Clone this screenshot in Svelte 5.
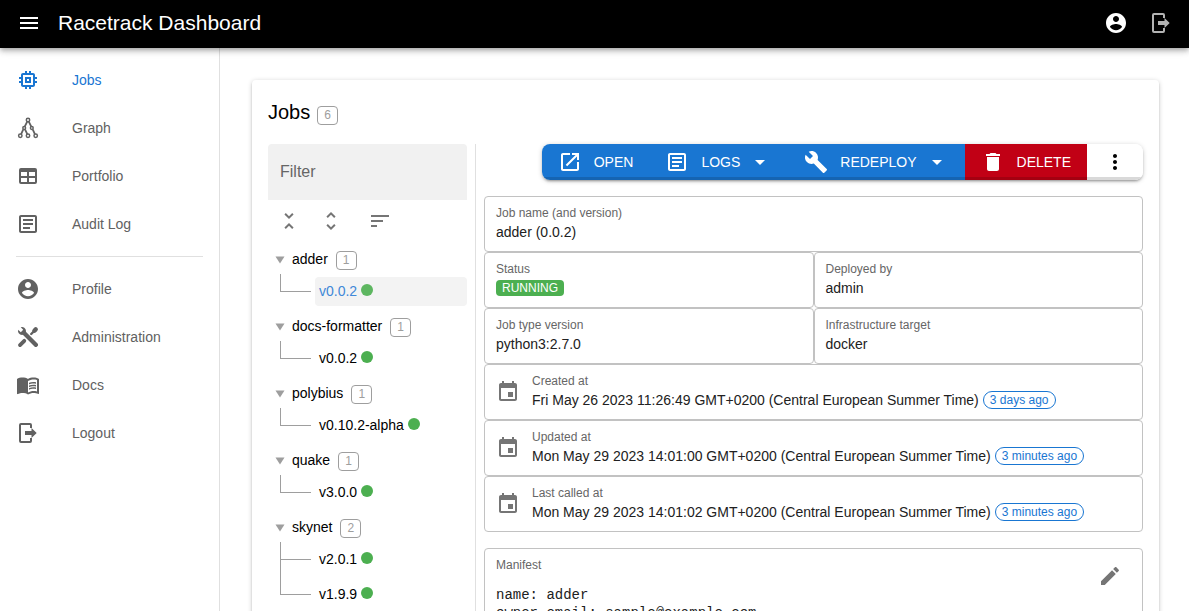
<script>
  const icons = {
    menu: 'M3 18h18v-2H3v2zm0-5h18v-2H3v2zm0-7v2h18V6H3z',
    account:
      'M12 2C6.48 2 2 6.48 2 12s4.48 10 10 10 10-4.48 10-10S17.52 2 12 2zm0 3c1.66 0 3 1.34 3 3s-1.34 3-3 3-3-1.34-3-3 1.34-3 3-3zm0 14.2c-2.5 0-4.71-1.28-6-3.22.03-1.99 4-3.08 6-3.08 1.99 0 5.97 1.09 6 3.08-1.29 1.94-3.5 3.22-6 3.22z',
    logout:
      'M15.500 17V14H9v-4h6.500V7l5.200 5-5.200 5M14 2a2 2 0 0 1 2 2v3h-2V4H5v16h9v-3h2v3a2 2 0 0 1-2 2H5a2 2 0 0 1-2-2V4a2 2 0 0 1 2-2h9z',
    memory:
      'M15 9H9v6h6V9zm-2 4h-2v-2h2v2zm8-2V9h-2V7c0-1.100-.9-2-2-2h-2V3h-2v2h-2V3H9v2H7c-1.100 0-2 .9-2 2v2H3v2h2v2H3v2h2v2c0 1.100.9 2 2 2h2v2h2v-2h2v2h2v-2h2c1.100 0 2-.9 2-2v-2h2v-2h-2v-2h2zm-4 6H7V7h10v10z',
    table:
      'M5 4h14a2 2 0 0 1 2 2v12a2 2 0 0 1-2 2H5a2 2 0 0 1-2-2V6a2 2 0 0 1 2-2m0 4v4h6V8H5m8 0v4h6V8h-6m-8 6v4h6v-4H5m8 0v4h6v-4h-6z',
    article:
      'M19 5v14H5V5h14m0-2H5c-1.100 0-2 .9-2 2v14c0 1.100.9 2 2 2h14c1.100 0 2-.9 2-2V5c0-1.100-.9-2-2-2zM14 17H7v-2h7v2zm3-4H7v-2h10v2zm0-4H7V7h10v2z',
    wrench:
      'M21.710 20.290l-1.420 1.420a1 1 0 0 1-1.410 0L7 9.850A3.810 3.810 0 0 1 6 10 4 4 0 0 1 2.220 4.700l2.540 2.540.530-.530 1.420-1.420.530-.530L4.700 2.220A4 4 0 0 1 10 6a3.810 3.810 0 0 1-.150 1l11.860 11.880a1 1 0 0 1 0 1.410',
    book:
      'M21 5c-1.110-.35-2.330-.5-3.500-.5-1.950 0-4.050.4-5.500 1.500-1.450-1.100-3.550-1.500-5.500-1.500S2.450 4.900 1 6v14.650c0 .25.25.5.5.5.1 0 .15-.05.25-.05C3.100 20.450 5.050 20 6.500 20c1.950 0 4.050.4 5.500 1.500 1.350-.85 3.800-1.500 5.500-1.500 1.650 0 3.350.3 4.750 1.050.1.05.15.05.25.05.25 0 .5-.25.5-.5V6c-.6-.45-1.250-.75-2-1zm0 13.500c-1.100-.35-2.300-.5-3.500-.5-1.700 0-4.150.65-5.500 1.500V8c1.350-.85 3.800-1.500 5.500-1.500 1.200 0 2.400.15 3.500.5v11.500zM17.500 10.500c.88 0 1.730.09 2.500.26V9.240c-.79-.15-1.640-.24-2.500-.24-1.700 0-3.240.29-4.500.83v1.660c1.130-.64 2.700-.99 4.500-.99zM13 12.490v1.660c1.130-.64 2.700-.99 4.500-.99.88 0 1.730.09 2.500.26V11.900c-.79-.15-1.640-.24-2.500-.24-1.700 0-3.240.3-4.500.83zm4.500 1.840c-1.700 0-3.240.29-4.500.83v1.660c1.130-.64 2.700-.99 4.500-.99.88 0 1.730.09 2.500.26v-1.520c-.79-.16-1.640-.24-2.500-.24z',
    less: 'M7.410 18.590L8.830 20 12 16.830 15.170 20l1.410-1.410L12 14l-4.590 4.590zm9.180-13.180L15.170 4 12 7.170 8.830 4 7.410 5.410 12 10l4.590-4.590z',
    more: 'M12 5.830L15.170 9l1.410-1.410L12 3 7.410 7.590 8.830 9 12 5.830zm0 12.340L8.830 15l-1.410 1.410L12 21l4.590-4.590L15.170 15 12 18.170z',
    sort: 'M3 18h6v-2H3v2zM3 6v2h18V6H3zm0 7h12v-2H3v2z',
    open: 'M19 19H5V5h7V3H5c-1.110 0-2 .9-2 2v14c0 1.100.89 2 2 2h14c1.100 0 2-.9 2-2v-7h-2v7zM14 3v2h3.590l-9.830 9.830 1.410 1.410L19 6.410V10h2V3h-7z',
    build:
      'M22.700 19l-9.100-9.100c.9-2.300.4-5-1.500-6.900-2-2-5-2.400-7.400-1.300L9 6 6 9 1.600 4.700C.4 7.100.9 10.100 2.900 12.100c1.900 1.900 4.600 2.400 6.900 1.500l9.100 9.100c.4.4 1 .4 1.400 0l2.300-2.300c.5-.4.5-1.100.1-1.400z',
    trash: 'M6 19c0 1.100.9 2 2 2h8c1.100 0 2-.9 2-2V7H6v12zM19 4h-3.500l-1-1h-5l-1 1H5v2h14V4z',
    dropdown: 'M7 10l5 5 5-5z',
    dots: 'M12 8c1.100 0 2-.9 2-2s-.9-2-2-2-2 .9-2 2 .9 2 2 2zm0 2c-1.100 0-2 .9-2 2s.9 2 2 2 2-.9 2-2-.9-2-2-2zm0 6c-1.100 0-2 .9-2 2s.9 2 2 2 2-.9 2-2-.9-2-2-2z',
    event:
      'M17 12h-5v5h5v-5zM16 1v2H8V1H6v2H5c-1.110 0-1.990.9-1.990 2L3 19c0 1.100.89 2 2 2h14c1.100 0 2-.9 2-2V5c0-1.100-.9-2-2-2h-1V1h-2zm3 18H5V8h14v11z',
    edit: 'M3 17.250V21h3.750L17.810 9.940l-3.750-3.750L3 17.250zM20.710 7.040c.39-.39.39-1.020 0-1.410l-2.340-2.340c-.39-.39-1.020-.39-1.410 0l-1.830 1.830 3.750 3.750 1.830-1.830z',
  };

  const mainLinks = [
    { label: 'Jobs', icon: 'memory', active: true },
    { label: 'Graph', icon: 'graph' },
    { label: 'Portfolio', icon: 'table' },
    { label: 'Audit Log', icon: 'article' },
  ];
  const userLinks = [
    { label: 'Profile', icon: 'account' },
    { label: 'Administration', icon: 'tools' },
    { label: 'Docs', icon: 'book' },
    { label: 'Logout', icon: 'logout' },
  ];

  const families = [
    { name: 'adder', versions: ['v0.0.2'] },
    { name: 'docs-formatter', versions: ['v0.0.2'] },
    { name: 'polybius', versions: ['v0.10.2-alpha'] },
    { name: 'quake', versions: ['v3.0.0'] },
    { name: 'skynet', versions: ['v2.0.1', 'v1.9.9'] },
  ];
  const jobCount = families.reduce((sum, family) => sum + family.versions.length, 0);

  let selected = $state('adder v0.0.2');
  let filter = $state('');

  const dates = [
    { label: 'Created at', value: 'Fri May 26 2023 11:26:49 GMT+0200 (Central European Summer Time)', ago: '3 days ago' },
    { label: 'Updated at', value: 'Mon May 29 2023 14:01:00 GMT+0200 (Central European Summer Time)', ago: '3 minutes ago' },
    { label: 'Last called at', value: 'Mon May 29 2023 14:01:02 GMT+0200 (Central European Summer Time)', ago: '3 minutes ago' },
  ];
  const manifest = 'name: adder\nowner_email: sample@example.com';
</script>

{#snippet icon(name)}
  <svg class="icon" viewBox="0 0 24 24" aria-hidden="true">
    {#if name === 'graph'}
      <g fill="none" stroke="currentColor" stroke-width="1.500">
        <circle cx="12" cy="4" r="1.700" />
        <circle cx="8.200" cy="12" r="1.400" />
        <circle cx="15.800" cy="12" r="1.400" />
        <circle cx="4.300" cy="19.700" r="1.700" />
        <circle cx="12" cy="19.700" r="1.700" />
        <circle cx="19.700" cy="19.700" r="1.700" />
        <path stroke-width="1.800" d="M11.200 5.600L8.700 10.600M12.800 5.600l2.500 5M7.300 13.400l-2.200 4.700M9 13.400l2.300 4.700M16.700 13.400l2.200 4.700" />
      </g>
    {:else if name === 'tools'}
      <path d={icons.wrench} fill="currentColor" />
      <g fill="none" stroke="currentColor" stroke-linecap="round">
        <path stroke-width="4" d="M9 8.800L20 19.900" />
        <path stroke-width="3.800" d="M4 20.100l4.300-4.300" />
        <path stroke-width="2.400" d="M15.200 9l3-3" />
        <path stroke-width="4.400" d="M18.400 5.700l1.300-1.300" />
      </g>
    {:else}
      <path d={icons[name]} fill="currentColor" />
    {/if}
  </svg>
{/snippet}

{#snippet links(items)}
  <ul>
    {#each items as item}
      <li>
        <a href="#{item.icon}" class:active={item.active}>
          {@render icon(item.icon)}
          <span>{item.label}</span>
        </a>
      </li>
    {/each}
  </ul>
{/snippet}

<div class="layout">
  <header>
    <button class="round" aria-label="Menu">{@render icon('menu')}</button>
    <h1>Racetrack Dashboard</h1>
    <button class="round" aria-label="Profile">{@render icon('account')}</button>
    <button class="round dim" aria-label="Logout">{@render icon('logout')}</button>
  </header>

  <div class="body">
    <nav>
      {@render links(mainLinks)}
      <hr />
      {@render links(userLinks)}
    </nav>

    <main>
      <section class="card">
        <h2>Jobs <span class="count">{jobCount}</span></h2>

        <div class="split">
          <div class="jobs">
            <input type="text" placeholder="Filter" aria-label="Filter" bind:value={filter} />
            <div class="tools">
              <button class="round" aria-label="Collapse all">{@render icon('less')}</button>
              <button class="round" aria-label="Expand all">{@render icon('more')}</button>
              <button class="wide" aria-label="Sort">{@render icon('sort')}</button>
            </div>
            <ul class="tree">
              {#each families as family}
                <li>
                  <div class="family">
                    <svg class="caret" viewBox="0 0 10 8" aria-hidden="true"><path d="M0.500 0.500h9L5 7.500z" fill="#9e9e9e" /></svg>
                    <span class="name">{family.name}</span>
                    <span class="count">{family.versions.length}</span>
                  </div>
                  <ul>
                    {#each family.versions as version}
                      {@const key = `${family.name} ${version}`}
                      <li class="version">
                        <span class="elbow"></span>
                        <button class:selected={selected === key} onclick={() => (selected = key)}>
                          {version}<i class="dot"></i>
                        </button>
                      </li>
                    {/each}
                  </ul>
                </li>
              {/each}
            </ul>
          </div>

          <div class="details">
            <div class="actions">
              <button>{@render icon('open')}<span>OPEN</span></button>
              <button class="menu">{@render icon('article')}<span>LOGS</span>{@render icon('dropdown')}</button>
              <button class="menu">{@render icon('build')}<span>REDEPLOY</span>{@render icon('dropdown')}</button>
              <button class="danger">{@render icon('trash')}<span>DELETE</span></button>
              <button class="plain" aria-label="More actions">{@render icon('dots')}</button>
            </div>

            <div class="fields">
              <div class="field full">
                <span class="label">Job name (and version)</span>
                <span class="value">adder (0.0.2)</span>
              </div>
              <div class="field">
                <span class="label">Status</span>
                <span class="value"><b class="status">RUNNING</b></span>
              </div>
              <div class="field">
                <span class="label">Deployed by</span>
                <span class="value">admin</span>
              </div>
              <div class="field">
                <span class="label">Job type version</span>
                <span class="value">python3:2.7.0</span>
              </div>
              <div class="field">
                <span class="label">Infrastructure target</span>
                <span class="value">docker</span>
              </div>
              {#each dates as date}
                <div class="field full dated">
                  {@render icon('event')}
                  <div>
                    <span class="label">{date.label}</span>
                    <span class="value">{date.value}<span class="ago">{date.ago}</span></span>
                  </div>
                </div>
              {/each}
            </div>

            <div class="field manifest">
              <div>
                <span class="label">Manifest</span>
                <pre>{manifest}</pre>
              </div>
              <button class="round" aria-label="Edit manifest">{@render icon('edit')}</button>
            </div>
          </div>
        </div>
      </section>
    </main>
  </div>
</div>

<style>
  :global(body) {
    margin: 0;
    background: #fff;
  }
  .layout {
    display: flex;
    flex-direction: column;
    height: 100vh;
    overflow: hidden;
    font: 14px/20px 'Liberation Sans', Arial, sans-serif;
    color: #000;
  }
  ul {
    list-style: none;
    margin: 0;
    padding: 0;
  }
  button {
    display: inline-flex;
    align-items: center;
    justify-content: center;
    border: 0;
    padding: 0;
    background: none;
    color: inherit;
    font: inherit;
    cursor: pointer;
  }
  .icon {
    display: block;
    flex: none;
    width: 24px;
    height: 24px;
  }
  .round {
    flex: none;
    width: 42px;
    height: 42px;
    border-radius: 50%;
  }

  header {
    flex: none;
    z-index: 1;
    display: flex;
    align-items: center;
    box-sizing: border-box;
    height: 48px;
    padding: 0 7px 2px 8px;
    gap: 3px;
    background: #000;
    color: #fff;
    box-shadow:
      0 2px 4px -1px rgba(0, 0, 0, 0.2),
      0 4px 5px rgba(0, 0, 0, 0.14),
      0 1px 10px rgba(0, 0, 0, 0.12);
  }
  h1 {
    flex: 1;
    margin: 0;
    padding-left: 5px;
    font-size: 21px;
    font-weight: 400;
    line-height: 32px;
  }
  .dim {
    opacity: 0.7;
  }

  .body {
    flex: 1;
    display: flex;
    min-height: 0;
  }
  nav {
    flex: none;
    box-sizing: border-box;
    width: 220px;
    padding-top: 8px;
    border-right: 1px solid #e0e0e0;
  }
  nav a {
    display: flex;
    align-items: center;
    gap: 32px;
    height: 48px;
    padding: 0 16px;
    color: #616161;
    text-decoration: none;
  }
  nav a.active {
    color: #1976d2;
  }
  hr {
    height: 1px;
    margin: 8px 16px;
    border: 0;
    background: #e0e0e0;
  }

  main {
    flex: 1;
    min-width: 0;
    padding: 32px 30px 32px 32px;
    overflow-y: auto;
    scrollbar-width: none;
  }
  .card {
    padding: 16px;
    border-radius: 4px;
    box-shadow:
      0 1px 5px rgba(0, 0, 0, 0.2),
      0 2px 2px rgba(0, 0, 0, 0.14),
      0 3px 1px -2px rgba(0, 0, 0, 0.12);
  }
  h2 {
    display: flex;
    align-items: center;
    gap: 7px;
    margin: 0 0 16px;
    font-size: 20px;
    font-weight: 400;
    line-height: 32px;
  }
  h2 .count {
    margin-top: 6px;
  }
  .count {
    padding: 2px 6px;
    border: 1px solid #9e9e9e;
    border-radius: 4px;
    color: #9e9e9e;
    font-size: 12px;
    line-height: 13px;
  }

  .split {
    display: flex;
  }
  .jobs {
    flex: none;
    width: 199px;
    padding-right: 8px;
    border-right: 1px solid #e0e0e0;
  }
  .jobs input {
    display: block;
    box-sizing: border-box;
    width: 100%;
    height: 56px;
    padding: 0 12px;
    border: 0;
    border-radius: 4px 4px 0 0;
    background: #f1f1f1;
    font: 16px 'Liberation Sans', Arial, sans-serif;
    color: #000;
  }
  .jobs input::placeholder {
    color: #666;
    opacity: 1;
  }
  .tools {
    display: flex;
    color: #757575;
  }
  .wide {
    width: 56px;
  }
  .family {
    display: flex;
    align-items: center;
    gap: 8px;
    height: 32px;
    padding: 4px 0 0 7px;
    box-sizing: border-box;
  }
  .caret {
    width: 10px;
    height: 8px;
  }
  .name {
    margin: 0 0 2px -1px;
  }
  .version {
    display: flex;
    gap: 4px;
    padding-left: 12px;
    height: 35px;
  }
  .elbow {
    flex: none;
    box-sizing: border-box;
    width: 31px;
    height: 18px;
    border: solid #9e9e9e;
    border-width: 0 0 1px 1px;
  }
  .version + .version .elbow {
    height: 53px;
    margin-top: -35px;
  }
  .version button {
    flex: 1;
    box-sizing: border-box;
    justify-content: flex-start;
    gap: 4px;
    height: 29px;
    margin-top: 3px;
    padding: 0 4px 2px;
    border-radius: 4px;
  }
  .version .selected {
    background: #f3f3f3;
    color: #4088d8;
  }
  .dot {
    width: 12px;
    height: 12px;
    margin-bottom: 1px;
    border-radius: 50%;
    background: #4caf50;
  }
  .selected .dot {
    opacity: 0.9;
  }

  .details {
    flex: 1;
    min-width: 0;
    padding-left: 8px;
  }
  .actions {
    display: flex;
    width: fit-content;
    margin: 0 0 16px auto;
    border-radius: 8px;
    overflow: hidden;
    box-shadow:
      0 1px 5px rgba(0, 0, 0, 0.2),
      0 2px 2px rgba(0, 0, 0, 0.14),
      0 3px 1px -2px rgba(0, 0, 0, 0.12);
  }
  .actions button {
    gap: 12px;
    height: 36px;
    padding: 0 16px;
    background: #1976d2;
    color: #fff;
    box-shadow: inset 0 -3px 0 rgba(0, 0, 0, 0.15);
  }
  .actions .menu .icon:last-child {
    margin-left: -4px;
  }
  .actions .danger {
    background: #c10015;
  }
  .actions .plain {
    background: #fff;
    color: #000;
  }

  .fields {
    display: grid;
    grid-template-columns: 1fr 1fr;
  }
  .field {
    box-sizing: border-box;
    min-height: 56px;
    padding: 8px 11px;
    border: 1px solid #c2c2c2;
    border-radius: 4px;
  }
  .full {
    grid-column: 1 / -1;
  }
  .dated {
    display: flex;
    gap: 12px;
  }
  .dated .icon {
    margin-top: 7px;
  }
  .field .icon {
    color: #757575;
  }
  .label {
    display: block;
    color: #666;
    font-size: 12px;
    line-height: 16px;
  }
  .value {
    display: flex;
    align-items: center;
    gap: 4px;
    height: 22px;
    color: #212121;
  }
  .status {
    margin-top: -1px;
    padding: 2px 6px;
    border-radius: 4px;
    background: #4caf50;
    color: #fff;
    font-size: 12px;
    font-weight: 400;
    line-height: 12px;
  }
  .ago {
    padding: 2px 6px;
    border: 1px solid #1976d2;
    border-radius: 9px;
    color: #1976d2;
    font-size: 12px;
    line-height: 12px;
  }
  .manifest {
    display: flex;
    justify-content: space-between;
    margin-top: 16px;
  }
  .manifest .round {
    margin-top: -2px;
  }
  pre {
    margin: 13px 0 0;
    color: #212121;
    font: 14px/18px 'Liberation Mono', monospace;
  }
</style>
